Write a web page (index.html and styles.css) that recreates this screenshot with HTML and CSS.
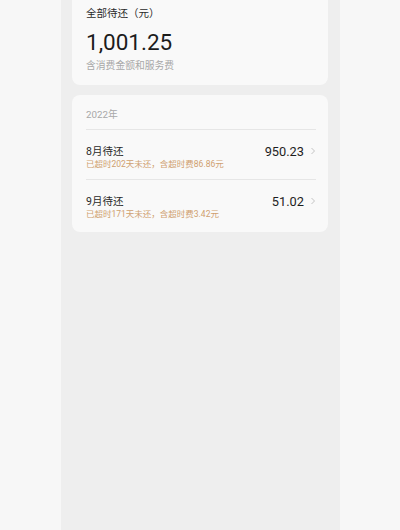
FILE: index.html
```html
<!DOCTYPE html>
<html lang="zh">
<head>
<meta charset="utf-8">
<link rel="stylesheet" href="styles.css">
</head>
<body>
<div class="column">
  <section class="card summary">
    <div class="summary-title">全部待还（元）</div>
    <div class="summary-amount">1,001.25</div>
    <div class="summary-note">含消费金额和服务费</div>
  </section>
  <section class="card bills">
    <div class="year">2022年</div>
    <div class="row">
      <div class="row-text">
        <div class="row-title">8月待还</div>
        <div class="row-sub">已超时202天未还，含超时费86.86元</div>
      </div>
      <div class="row-amount">950.23</div>
      <svg class="chev" width="6" height="8" viewBox="0 0 6 8"><path d="M1.5 1 L4.5 4 L1.5 7" fill="none" stroke="#c4c4c4" stroke-width="1"/></svg>
    </div>
    <div class="row">
      <div class="row-text">
        <div class="row-title">9月待还</div>
        <div class="row-sub">已超时171天未还，含超时费3.42元</div>
      </div>
      <div class="row-amount">51.02</div>
      <svg class="chev" width="6" height="8" viewBox="0 0 6 8"><path d="M1.5 1 L4.5 4 L1.5 7" fill="none" stroke="#c4c4c4" stroke-width="1"/></svg>
    </div>
  </section>
</div>
</body>
</html>
```
FILE: styles.css
```css
html, body {
  margin: 0;
  padding: 0;
  background: #f7f7f7;
  font-family: Roboto, "Noto Sans CJK SC", sans-serif;
}
.column {
  margin-left: 61px;
  width: 279px;
  min-height: 530px;
  background: #eeeeee;
  padding: 0 12px 0 11px;
  box-sizing: border-box;
  overflow: hidden;
}
.card {
  background: #f9f9f9;
  border-radius: 8px;
  padding-left: 14px;
  padding-right: 12px;
}
.summary {
  margin-top: -10px;
  padding-top: 17px;
  padding-bottom: 12px;
}
.summary-title {
  font-size: 10.5px;
  line-height: 14px;
  color: #2a2a2a;
}
.summary-amount {
  margin-top: 7px;
  font-size: 22.5px;
  line-height: 28px;
  color: #1c1c1c;
}
.summary-note {
  margin-top: 3px;
  font-size: 9.8px;
  line-height: 14px;
  color: #a8a8a8;
}
.bills {
  margin-top: 10px;
  padding-top: 13px;
  padding-bottom: 3px;
}
.year {
  font-size: 9.8px;
  line-height: 14px;
  color: #a8a8a8;
  padding-bottom: 7px;
  border-bottom: 1px solid #e6e6e6;
}
.row {
  display: flex;
  align-items: flex-start;
  padding: 15px 0 9px;
}
.row + .row {
  border-top: 1px solid #e6e6e6;
}
.row-text {
  flex: 1;
}
.row-title {
  font-size: 10.5px;
  line-height: 13px;
  color: #2a2a2a;
}
.row-sub {
  font-size: 8.5px;
  line-height: 12px;
  color: #cf9f6f;
}
.row-amount {
  font-size: 12.8px;
  line-height: 11px;
  color: #1e1e1e;
  margin-top: 1px;
}
.chev {
  margin-left: 6px;
  margin-top: 2px;
}
```
